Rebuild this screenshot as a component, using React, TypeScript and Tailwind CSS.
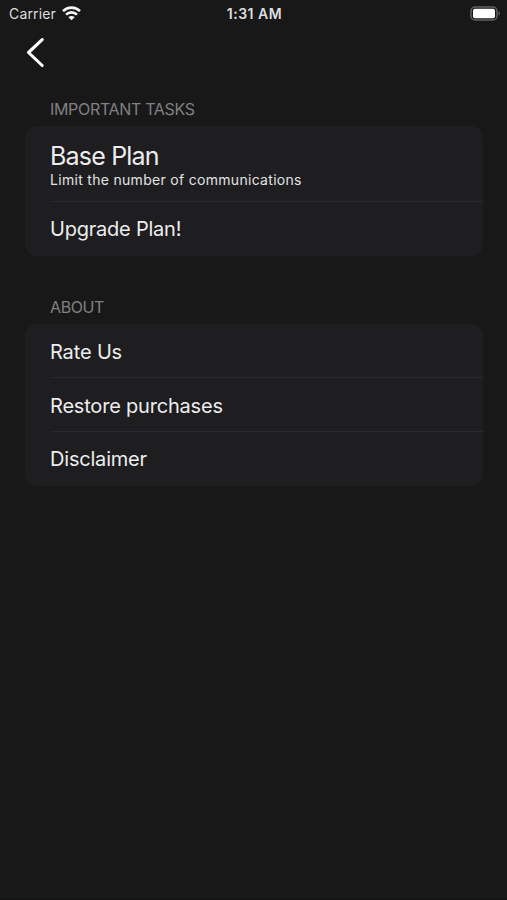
import { clsx } from 'clsx';

interface SettingsRow {
  key:        string;
  title:      string;
  subtitle?:  string;
  className?: string;
  titleClassName?: string;
}

interface SettingsGroup {
  header:     string;
  headerClassName?: string;
  className?: string;
  rows:       SettingsRow[];
}

const groups: SettingsGroup[] = [
  {
    header: 'IMPORTANT TASKS',
    headerClassName: 'tracking-[-0.32px]',
    className: 'mt-[27px]',
    rows: [
      {
        key: 'plan',
        title: 'Base Plan',
        subtitle: 'Limit the number of communications',
        className: 'h-[76px] pt-[2px]',
        titleClassName: 'text-[25px] leading-[30px] tracking-[-0.8px]',
      },
      { key: 'upgrade', title: 'Upgrade Plan!', className: 'h-[54px]', titleClassName: 'tracking-[-0.22px]' },
    ],
  },
  {
    header: 'ABOUT',
    headerClassName: 'tracking-[-0.4px]',
    className: 'mt-[41px]',
    rows: [
      { key: 'rate', title: 'Rate Us', className: 'h-[54px] pt-[2px]', titleClassName: 'tracking-[-0.15px]' },
      { key: 'restore', title: 'Restore purchases', className: 'h-[54px] pt-[2px]', titleClassName: 'tracking-[-0.2px]' },
      { key: 'disclaimer', title: 'Disclaimer', className: 'h-[54px]', titleClassName: 'tracking-[-0.2px]' },
    ],
  },
];

function WifiIcon() {
  return (
    <svg width="19" height="15" viewBox="0 0 19 15" fill="none" stroke="#f4f4f4" strokeWidth="2.6">
      <path d="M1 5.1a12.2 12.2 0 0 1 17 0" />
      <path d="M4 8.6a7.8 7.8 0 0 1 11 0" />
      <path d="M9.5 14.3 6.3 11.3a4.5 4.5 0 0 1 6.4 0Z" fill="#f4f4f4" stroke="none" />
    </svg>
  );
}

function BatteryIcon() {
  return (
    <svg width="31" height="15" viewBox="0 0 31 15" fill="none">
      <rect x="1" y="1" width="26" height="13" rx="4" stroke="#616161" strokeWidth="1.5" />
      <rect x="3" y="2.7" width="22" height="9.6" rx="2" fill="#ffffff" />
      <path d="M28.6 5.3v4.4a2.4 2.4 0 0 0 0-4.4Z" fill="#616161" />
    </svg>
  );
}

function StatusBar() {
  return (
    <div className="grid h-7 grid-cols-3 items-center pb-px pl-[8px] pr-[6px] leading-none text-[#dedede]">
      <div className="flex items-center gap-[6px]">
        <span className="pl-px pt-px text-[14px] tracking-[0.15px]">Carrier</span>
        <WifiIcon />
      </div>
      <span className="pt-px text-center text-[14px] font-semibold tracking-[0.5px]">1:31 AM</span>
      <div className="flex justify-end">
        <BatteryIcon />
      </div>
    </div>
  );
}

function Row({ row, divided }: { row: SettingsRow; divided: boolean }) {
  return (
    <li className={clsx('ml-[25px] flex flex-col justify-center', divided && 'border-b border-[#2a2a2c]', row.className)}>
      <span className={clsx('whitespace-nowrap text-[#ededed]', !row.subtitle && 'text-[20px] leading-6', row.titleClassName)}>
        {row.title}
      </span>
      {row.subtitle && (
        <span className="whitespace-nowrap text-[14px] leading-[18px] tracking-[0.3px] text-[#e2e2e2]">
          {row.subtitle}
        </span>
      )}
    </li>
  );
}

function Group({ group }: { group: SettingsGroup }) {
  return (
    <section className={clsx('pl-[25px] pr-6', group.className)}>
      <h2 className={clsx('ml-[25px] h-[27px] text-[16px] leading-5 text-[#808083]', group.headerClassName)}>
        {group.header}
      </h2>
      <ul className="rounded-[12px] bg-[#1e1e20]">
        {group.rows.map((row, i) => (
          <Row key={row.key} row={row} divided={i < group.rows.length - 1} />
        ))}
      </ul>
    </section>
  );
}

export default function App() {
  return (
    <div className="h-[900px] w-[507px] overflow-hidden border-b-2 border-[#191216] bg-[#181818] font-['Inter',sans-serif]">
      <StatusBar />
      <button aria-label="Back" className="ml-6 block h-11 w-6 pb-[4px] pt-[8px]">
        <svg width="24" height="32" viewBox="0 0 24 32" fill="none">
          <path d="M18.2 3.6 4.5 16.5l13.7 13" stroke="#ffffff" strokeWidth="3.1" strokeLinecap="round" strokeLinejoin="round" />
        </svg>
      </button>
      {groups.map((group) => (
        <Group key={group.header} group={group} />
      ))}
    </div>
  );
}
